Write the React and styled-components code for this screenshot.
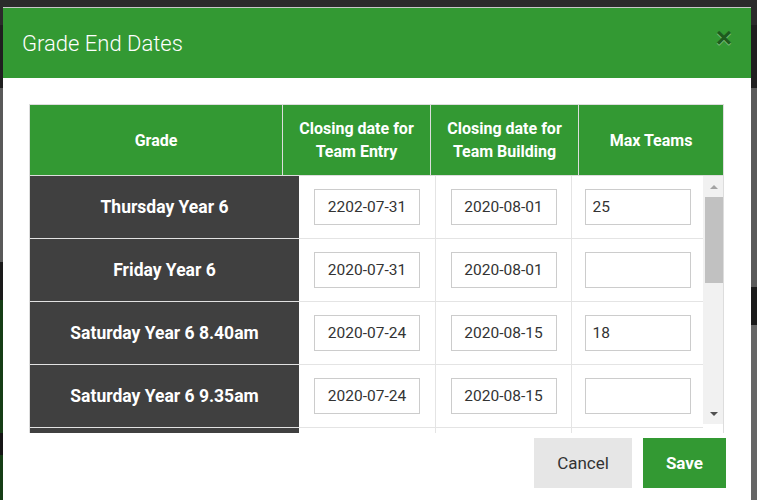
import styled, { createGlobalStyle } from 'styled-components'

const GlobalStyle = createGlobalStyle`
  html, body {
    margin: 0;
    height: 500px;
    overflow: hidden;
  }
  body {
    font-family: Roboto, "Liberation Sans", sans-serif;
    background:
      linear-gradient(to bottom, #2b2b2b 0 25px, #1f1f1f 25px 88px, #595959 88px 262px, #1a1a1a 262px 300px, #163d16 300px 433px, #151515 433px 455px, #163d16 455px) left top / 380px 100% no-repeat,
      linear-gradient(to bottom, #2b2b2b 0 25px, #1f1f1f 25px 88px, #5a5a5a 88px 287px, #1a1a1a 287px 325px, #666 325px) right top / 380px 100% no-repeat;
  }
  * {
    box-sizing: border-box;
  }
`

const Backdrop = styled.div`
  padding: 7px 0 0 3px;
`

const Modal = styled.div`
  width: 748px;
  height: 493px;
  background: #fff;
  border-top: 1px solid #c8c8c8;
  overflow: hidden;
`

const Header = styled.div`
  display: flex;
  align-items: center;
  justify-content: space-between;
  height: 70px;
  padding: 0 19px;
  background: #339933;
`

const Title = styled.h4`
  margin: 0;
  color: #fff;
  font-size: 22px;
  font-weight: 300;
`

const CloseButton = styled.button`
  margin-top: -10px;
  padding: 0;
  border: 0;
  background: transparent;
  font-family: "Liberation Sans", Arial, sans-serif;
  font-size: 28px;
  font-weight: bold;
  line-height: 1;
  color: #000;
  text-shadow: 0 1px 0 #fff;
  opacity: 0.4;
  cursor: pointer;
`

const Body = styled.div`
  padding: 26px 25px 0 26px;
`

const Table = styled.div`
  width: 695px;
  border: 1px solid #dddddd;
  border-bottom: 0;
`

const HeadRow = styled.div`
  display: grid;
  grid-template-columns: 253px 148px 148px 1fr;
  height: 71px;
  background: #339933;
  border-bottom: 1px solid #dddddd;
`

const HeadCell = styled.div`
  display: flex;
  align-items: center;
  justify-content: center;
  text-align: center;
  color: #fff;
  font-size: 16px;
  font-weight: 700;
  line-height: 23px;
  border-right: ${({ $last }) => ($last ? '0' : '1px solid #dddddd')};
`

const ScrollArea = styled.div`
  display: flex;
  height: 257px;
`

const Rows = styled.div`
  flex: 1;
  overflow: hidden;
`

const Row = styled.div`
  display: grid;
  grid-template-columns: 269px 137px 136px 1fr;
  height: 63px;
`

const GradeCell = styled.div`
  display: flex;
  align-items: center;
  justify-content: center;
  background: #404040;
  color: #fff;
  font-size: 17.5px;
  font-weight: 700;
  border-bottom: 1px solid #e2e2e2;
`

const InputCell = styled.div`
  display: flex;
  align-items: center;
  justify-content: center;
  border-bottom: 1px solid #e4e4e4;
  border-right: ${({ $last }) => ($last ? '0' : '1px solid #e4e4e4')};
`

const TextInput = styled.input`
  width: 106px;
  height: 36px;
  padding: 0 7px;
  border: 1px solid #cccccc;
  font-family: Roboto, "Liberation Sans", sans-serif;
  font-size: 15.5px;
  color: #333;
  text-align: ${({ $center }) => ($center ? 'center' : 'left')};
  outline: none;
`

const Scrollbar = styled.div`
  display: flex;
  flex-direction: column;
  width: 20px;
  height: 248px;
  background: #f1f1f1;
`

const ArrowButton = styled.div`
  display: flex;
  justify-content: center;
  align-items: center;
  height: 21px;
  padding-left: 2px;
  &::after {
    content: '';
    border-left: 4px solid transparent;
    border-right: 4px solid transparent;
    ${({ $down }) =>
      $down ? 'border-top: 4px solid #505050;' : 'border-bottom: 4px solid #a3a3a3;'}
  }
`

const Thumb = styled.div`
  height: 86px;
  margin-left: 2px;
  background: #c1c1c1;
`

const Track = styled.div`
  flex: 1;
`

const Footer = styled.div`
  display: flex;
  justify-content: flex-end;
  gap: 11px;
  padding-top: 5px;
`

const Button = styled.button`
  height: 50px;
  padding: 0 23px;
  border: 0;
  font-family: Roboto, "Liberation Sans", sans-serif;
  font-size: 17px;
  font-weight: ${({ $primary }) => ($primary ? 700 : 400)};
  color: ${({ $primary }) => ($primary ? '#fff' : '#333')};
  background: ${({ $primary }) => ($primary ? '#339933' : '#e6e6e6')};
  cursor: pointer;
`

const grades = [
  { name: 'Thursday Year 6', entry: '2202-07-31', building: '2020-08-01', max: '25' },
  { name: 'Friday Year 6', entry: '2020-07-31', building: '2020-08-01', max: '' },
  { name: 'Saturday Year 6 8.40am', entry: '2020-07-24', building: '2020-08-15', max: '18' },
  { name: 'Saturday Year 6 9.35am', entry: '2020-07-24', building: '2020-08-15', max: '' },
  // next row, scrolled below the fold
  { name: '', entry: '', building: '', max: '' },
]

function App() {
  return (
    <>
      <GlobalStyle />
      <Backdrop>
        <Modal>
          <Header>
            <Title>Grade End Dates</Title>
            <CloseButton aria-label="Close">×</CloseButton>
          </Header>
          <Body>
            <Table>
              <HeadRow>
                <HeadCell>Grade</HeadCell>
                <HeadCell>Closing date for<br />Team Entry</HeadCell>
                <HeadCell>Closing date for<br />Team Building</HeadCell>
                <HeadCell $last>Max Teams</HeadCell>
              </HeadRow>
              <ScrollArea>
                <Rows>
                  {grades.map((grade, index) => (
                    <Row key={`Grade-${index}`}>
                      <GradeCell>{grade.name}</GradeCell>
                      <InputCell>
                        <TextInput $center defaultValue={grade.entry} />
                      </InputCell>
                      <InputCell>
                        <TextInput $center defaultValue={grade.building} />
                      </InputCell>
                      <InputCell $last>
                        <TextInput defaultValue={grade.max} />
                      </InputCell>
                    </Row>
                  ))}
                </Rows>
                <Scrollbar>
                  <ArrowButton />
                  <Thumb />
                  <Track />
                  <ArrowButton $down />
                </Scrollbar>
              </ScrollArea>
            </Table>
            <Footer>
              <Button>Cancel</Button>
              <Button $primary>Save</Button>
            </Footer>
          </Body>
        </Modal>
      </Backdrop>
    </>
  )
}

export default App
